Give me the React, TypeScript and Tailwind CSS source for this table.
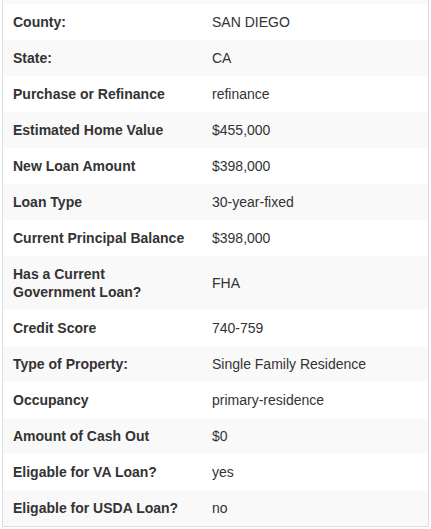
const rows: [string, string][] = [
  ["County:", "SAN DIEGO"],
  ["State:", "CA"],
  ["Purchase or Refinance", "refinance"],
  ["Estimated Home Value", "$455,000"],
  ["New Loan Amount", "$398,000"],
  ["Loan Type", "30-year-fixed"],
  ["Current Principal Balance", "$398,000"],
  ["Has a Current Government Loan?", "FHA"],
  ["Credit Score", "740-759"],
  ["Type of Property:", "Single Family Residence"],
  ["Occupancy", "primary-residence"],
  ["Amount of Cash Out", "$0"],
  ["Eligable for VA Loan?", "yes"],
  ["Eligable for USDA Loan?", "no"],
];

export default function App() {
  return (
    <div
      className="min-h-[529px] bg-white text-[14px] leading-[18px] text-[#333]"
      style={{ fontFamily: '"Liberation Sans", Arial, sans-serif' }}
    >
      <div className="ml-[2px] w-[427px] border-x border-b border-[#ddd]">
        <div className="h-[4px] bg-[#f9f9f9]" />
        {rows.map(([k, v], i) => (
          <div key={k} className={`flex items-center ${i % 2 === 1 ? "bg-[#f9f9f9]" : "bg-white"}`}>
            <div className="w-[199px] shrink-0 pl-[10px] pr-[15px] py-[9px] font-bold">{k}</div>
            <div className="px-[10px] py-[9px]">{v}</div>
          </div>
        ))}
      </div>
    </div>
  );
}
